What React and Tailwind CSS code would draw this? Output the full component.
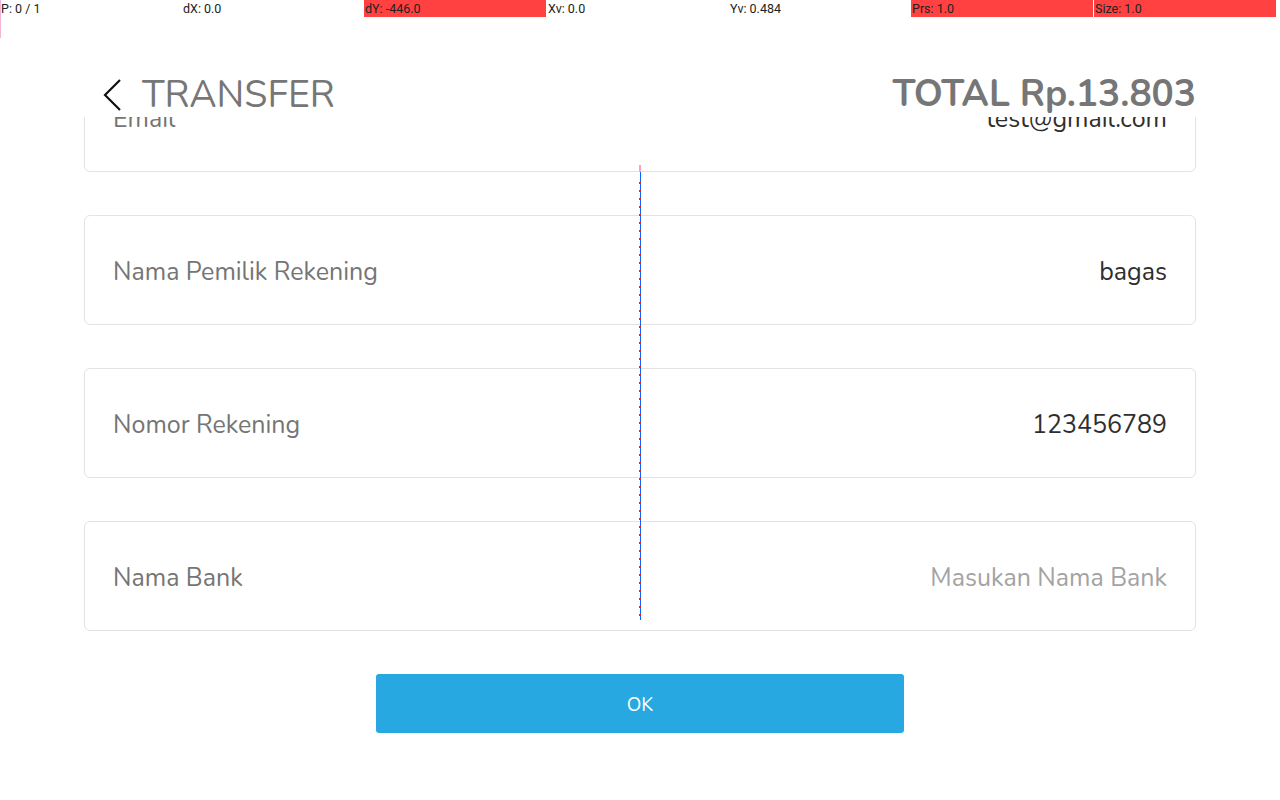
import React from 'react';

const stats = [
  { label: 'P: 0 / 1', hot: false },
  { label: 'dX: 0.0', hot: false },
  { label: 'dY: -446.0', hot: true },
  { label: 'Xv: 0.0', hot: false },
  { label: 'Yv: 0.484', hot: false },
  { label: 'Prs: 1.0', hot: true },
  { label: 'Size: 1.0', hot: true },
];

const fields = [
  { label: 'Email', value: 'test@gmail.com' },
  { label: 'Nama Pemilik Rekening', value: 'bagas' },
  { label: 'Nomor Rekening', value: '123456789' },
  { label: 'Nama Bank', value: '', placeholder: 'Masukan Nama Bank' },
];

function PointerBar() {
  return (
    <div className="absolute top-0 left-0 z-20 flex w-full h-[17px] font-['Roboto',sans-serif] text-[12.5px] leading-[17px] text-[#222]">
      {stats.map((s) => (
        <div
          key={s.label}
          className={'w-[182px] shrink-0 pl-[1px] ' + (s.hot ? 'bg-[#ff4141] mr-[1px] w-[181px]' : '')}
        >
          {s.label}
        </div>
      ))}
    </div>
  );
}

function PointerTrace() {
  const dots = [];
  for (let y = 182; y <= 619; y += 8) dots.push(y);
  return (
    <>
      <div className="absolute left-0 top-0 z-20 w-[1px] h-[38px] bg-[#f3b6d8]" />
      <div className="absolute left-[639px] top-[165px] z-20 w-[2px] h-[7px] bg-[#f6a3c4]" />
      <div className="absolute left-[640px] top-[172px] z-20 w-[1px] h-[448px] bg-[#0a64ff]" />
      {dots.map((y) => (
        <div
          key={y}
          className="absolute left-[639px] z-20 w-[2px] h-[2px] bg-[#ff1a1a]"
          style={{ top: y }}
        />
      ))}
    </>
  );
}

function Field({ label, value, placeholder }) {
  return (
    <div className="flex items-center justify-between h-[110px] px-[28px] pt-[6px] bg-white border border-[#e3e3e3] rounded-[6px] text-[25px]">
      <span className="text-[#757575]">{label}</span>
      {value ? (
        <span className="text-[#2e2e2e]">{value}</span>
      ) : (
        <span className="text-[#a3a3a3]">{placeholder}</span>
      )}
    </div>
  );
}

export default function App() {
  return (
    <div className="relative w-[1280px] h-[800px] overflow-hidden bg-white font-['Nunito','Lato',sans-serif]">
      <PointerBar />
      <PointerTrace />

      <div className="flex flex-col h-full">
        <div className="relative z-10 h-[117px] shrink-0 bg-white">
          <div className="flex items-center justify-between mt-[71px] h-[48px] pl-[101px] pr-[84px]">
            <div className="flex items-center gap-[19px]">
              <svg width="22" height="34" viewBox="0 0 22 34" fill="none">
                <path d="M19 2 L4 17 L19 32" stroke="#111" strokeWidth="2.2" />
              </svg>
              <span className="text-[37.5px] text-[#767676]">TRANSFER</span>
            </div>
            <span className="text-[37px] font-bold text-[#767676]">TOTAL Rp.13.803</span>
          </div>
        </div>

        <div className="flex-1 overflow-hidden">
          <div className="flex flex-col gap-[43px] mx-[84px] -mt-[55px]">
            {fields.map((f) => (
              <Field key={f.label} {...f} />
            ))}
            <div className="flex justify-center">
              <button className="w-[528px] h-[59px] pt-[3px] rounded-[3px] bg-[#27a8e0] text-white text-[19px]">
                OK
              </button>
            </div>
          </div>
        </div>
      </div>
    </div>
  );
}
